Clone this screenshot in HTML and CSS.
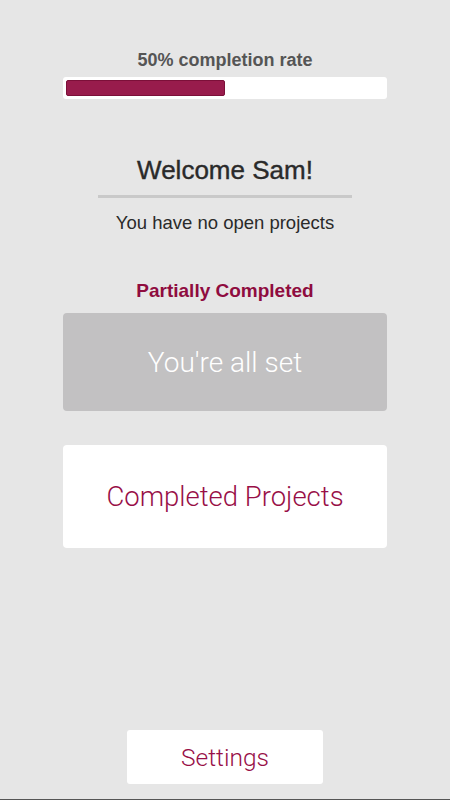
FILE: index.html
```html
<!DOCTYPE html>
<html lang="en">
<head>
    <meta charset="UTF-8">
    <meta name="viewport" content="width=device-width, initial-scale=1.0">
    <title>Dashboard</title>
    <link rel="stylesheet" href="styles.css">
</head>
<body>

    <div class="page">
        <div class="rate-label">50% completion rate</div>
        <div class="progress">
            <div class="progress-fill" style="width: 50%;"></div>
        </div>

        <h1 class="welcome">Welcome Sam!</h1>
        <div class="divider"></div>
        <p class="status">You have no open projects</p>

        <h2 class="section-title">Partially Completed</h2>
        <div class="card card-empty">You're all set</div>

        <div class="card card-link">Completed Projects</div>

        <div class="settings-btn">Settings</div>
    </div>

</body>
</html>
```

FILE: styles.css
```css
body {
    margin: 0;
    background-color: #e6e6e6;
    font-family: "Liberation Sans", Arial, sans-serif;
}
.page {
    height: 800px;
    box-sizing: border-box;
    padding: 0 63px;
    display: flex;
    flex-direction: column;
    align-items: stretch;
    border-bottom: 1px solid #555;
}
.rate-label {
    margin-top: 50px;
    text-align: center;
    font-size: 18px;
    line-height: 20px;
    font-weight: bold;
    color: #555;
}
.progress {
    margin-top: 7px;
    height: 22px;
    box-sizing: border-box;
    padding: 3px;
    background-color: #fff;
    border-radius: 3px;
}
.progress-fill {
    height: 16px;
    box-sizing: border-box;
    background-color: #981c4c;
    border: 1px solid #7c1039;
    border-radius: 2px;
}
.welcome {
    margin: 57px 0 0;
    text-align: center;
    font-size: 26px;
    line-height: 28px;
    font-weight: normal;
    color: #2a2a2a;
    -webkit-text-stroke: 0.4px #2a2a2a;
}
.divider {
    align-self: center;
    width: 254px;
    height: 3px;
    margin-top: 11px;
    background-color: #c9c9c9;
}
.status {
    margin: 14px 0 0;
    text-align: center;
    font-size: 18.5px;
    line-height: 22px;
    color: #2a2a2a;
}
.section-title {
    margin: 46px 0 0;
    text-align: center;
    font-size: 19px;
    line-height: 22px;
    font-weight: bold;
    color: #8f0c3f;
}
.card {
    display: flex;
    align-items: center;
    justify-content: center;
    border-radius: 4px;
    font-family: Roboto, "Liberation Sans", sans-serif;
    font-weight: 300;
}
.card-empty {
    margin-top: 11px;
    height: 98px;
    background-color: #c2c1c2;
    color: #fff;
    font-size: 28px;
}
.card-link {
    margin-top: 34px;
    height: 103px;
    background-color: #fff;
    color: #980f47;
    font-size: 27.5px;
}
.settings-btn {
    margin-top: auto;
    margin-bottom: 15px;
    align-self: center;
    width: 196px;
    height: 54px;
    display: flex;
    align-items: center;
    justify-content: center;
    background-color: #fff;
    border-radius: 3px;
    font-family: Roboto, "Liberation Sans", sans-serif;
    font-weight: 300;
    font-size: 24.5px;
    color: #980f47;
}
```
